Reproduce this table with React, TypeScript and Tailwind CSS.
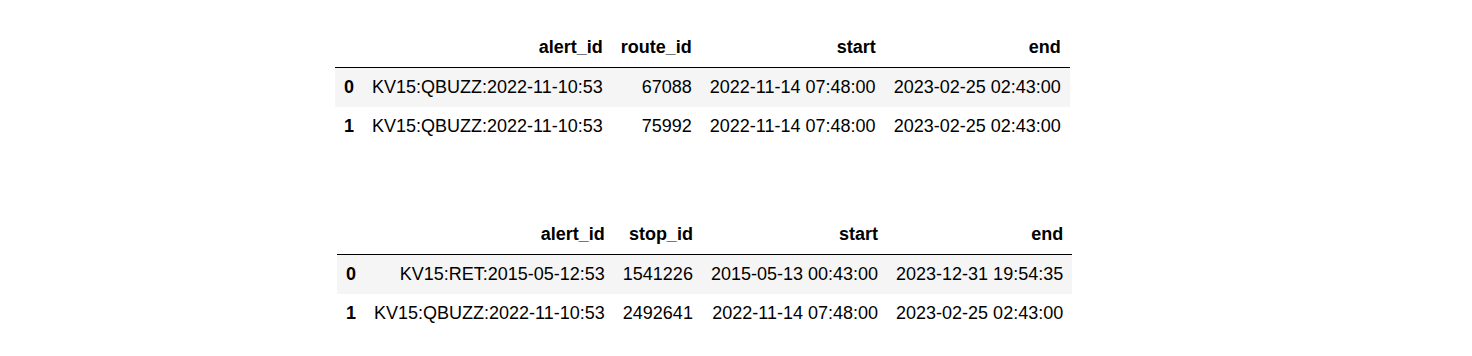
type Row = { idx: string; cells: string[] };

const routes: Row[] = [
  { idx: '0', cells: ['KV15:QBUZZ:2022-11-10:53', '67088', '2022-11-14 07:48:00', '2023-02-25 02:43:00'] },
  { idx: '1', cells: ['KV15:QBUZZ:2022-11-10:53', '75992', '2022-11-14 07:48:00', '2023-02-25 02:43:00'] },
];

const stops: Row[] = [
  { idx: '0', cells: ['KV15:RET:2015-05-12:53', '1541226', '2015-05-13 00:43:00', '2023-12-31 19:54:35'] },
  { idx: '1', cells: ['KV15:QBUZZ:2022-11-10:53', '2492641', '2022-11-14 07:48:00', '2023-02-25 02:43:00'] },
];

const DataFrame = ({ columns, rows }: { columns: string[]; rows: Row[] }) => {
  return (
    <table className="border-collapse text-right text-[18px] leading-[21px] text-black">
      <thead>
        <tr className="border-b border-black">
          <th className="px-[9px] py-[9px]"></th>
          {columns.map((c) => (
            <th key={c} className="px-[9px] py-[9px] font-bold">
              {c}
            </th>
          ))}
        </tr>
      </thead>
      <tbody>
        {rows.map((r, i) => (
          <tr key={r.idx} className={i % 2 === 0 ? 'bg-[#f5f5f5]' : ''}>
            <th className="px-[9px] py-[9px] font-bold">{r.idx}</th>
            {r.cells.map((v, j) => (
              <td key={j} className="px-[9px] py-[9px] whitespace-nowrap">
                {v}
              </td>
            ))}
          </tr>
        ))}
      </tbody>
    </table>
  );
};

export default function App() {
  return (
    <div className="w-[1472px] h-[356px] bg-white font-['Liberation_Sans',Arial,sans-serif] pt-[28px]">
      <div className="pl-[335px]">
        <DataFrame columns={['alert_id', 'route_id', 'start', 'end']} rows={routes} />
      </div>
      <div className="pl-[337px] mt-[69px]">
        <DataFrame columns={['alert_id', 'stop_id', 'start', 'end']} rows={stops} />
      </div>
    </div>
  );
}
